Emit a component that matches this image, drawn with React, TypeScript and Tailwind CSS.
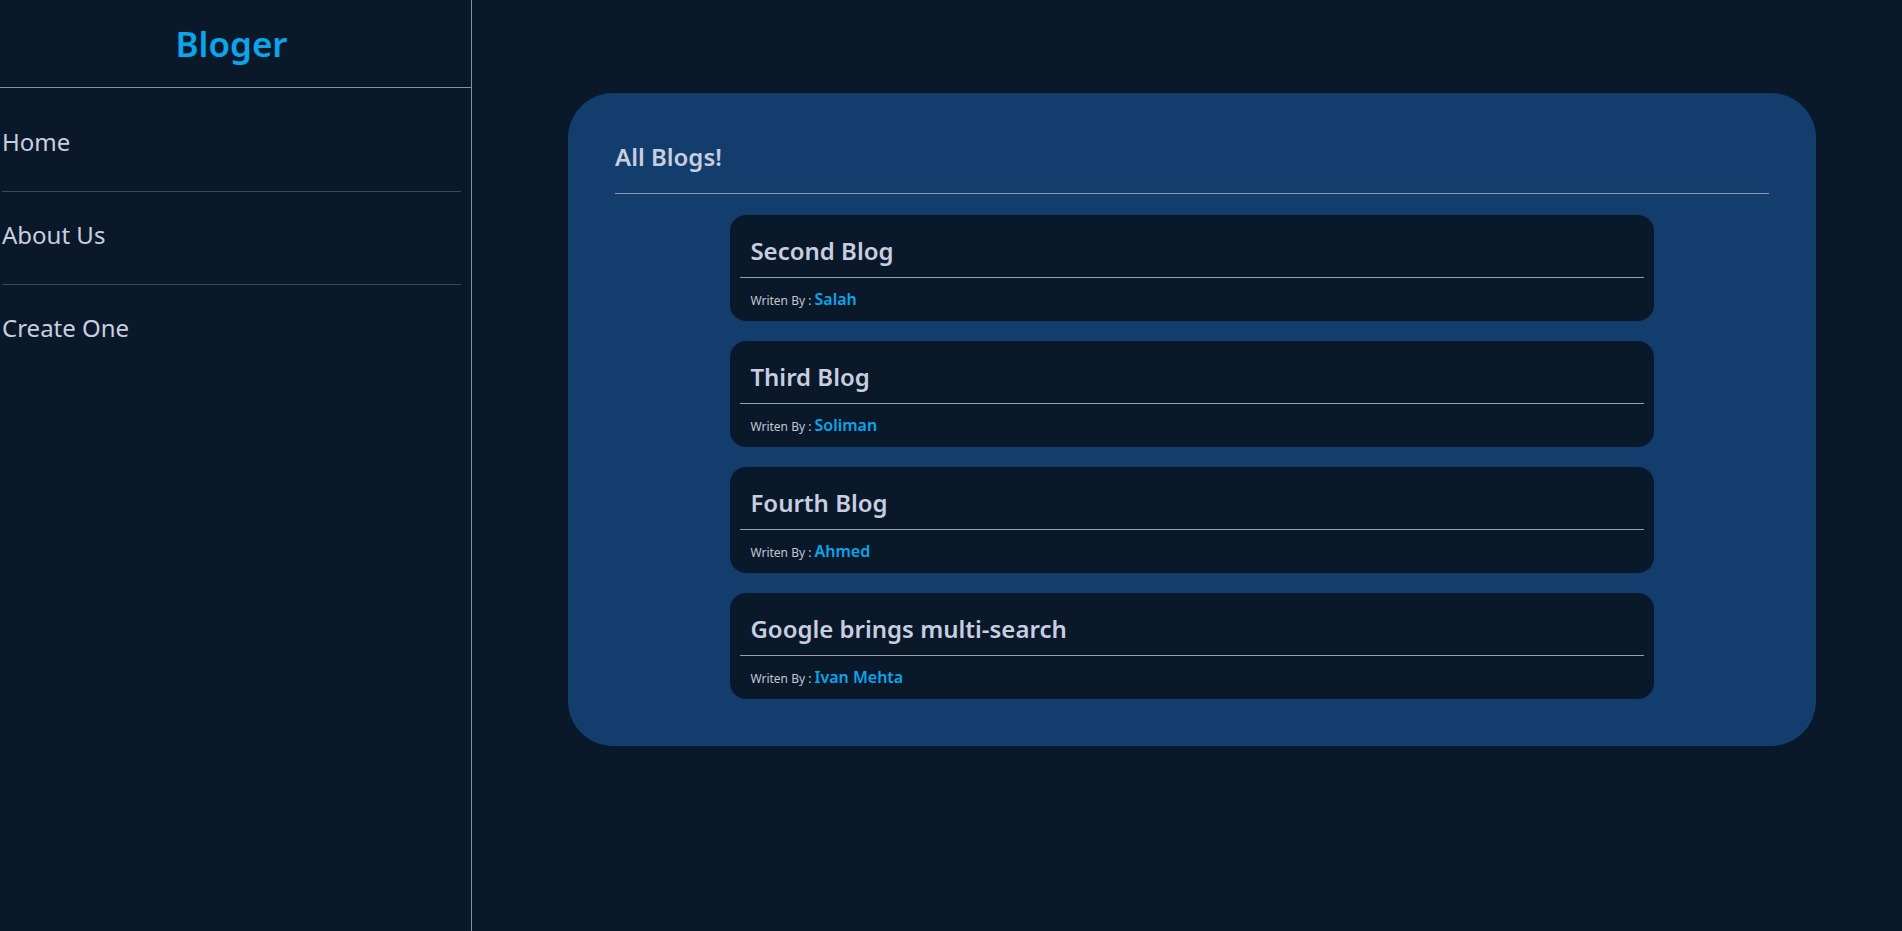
import React from "react";

const blogs = [
  { title: "Second Blog", author: "Salah" },
  { title: "Third Blog", author: "Soliman" },
  { title: "Fourth Blog", author: "Ahmed" },
  { title: "Google brings multi-search", author: "Ivan Mehta" },
];

const links = ["Home", "About Us", "Create One"];

export default function App() {
  return (
    <div
      className="flex h-[931px] w-full overflow-hidden bg-[#0a1929] text-[#c8cee0]"
      style={{ fontFamily: '"Noto Sans", "Open Sans", sans-serif' }}
    >
      {/* Sidebar */}
      <aside className="flex h-full w-[472px] shrink-0 flex-col border-r border-[#8a8e96]">
        <div className="flex h-[88px] items-center justify-center border-b border-[#8a8e96] pr-[8px]">
          <h1 className="text-[35px] font-semibold leading-10 text-[#0ba5ec]">Bloger</h1>
        </div>
        <ul className="ml-[2px] mr-[10px] mt-[11px]">
          {links.map((l, i) => (
            <li
              key={l}
              className={`pb-[33px] pt-[27px] text-2xl leading-8 ${
                i < links.length - 1 ? "border-b border-[#3d4757]" : ""
              }`}
            >
              {l}
            </li>
          ))}
        </ul>
      </aside>

      {/* Main */}
      <main className="flex-1">
        <section className="ml-[96px] mt-[93px] w-[1248px] rounded-[45px] bg-[#123d6c] px-[47px] pb-[47px] pt-[48px]">
          <h2 className="pb-[20px] text-2xl font-semibold leading-8 text-[#c8cee0]">All Blogs!</h2>
          <div className="border-t border-[#8f98a8]" />
          <div className="mx-auto mt-[21px] flex w-[80%] flex-col gap-[20px]">
            {blogs.map((b) => (
              <div key={b.title} className="rounded-2xl bg-[#0a1929] px-[10px] pb-[10px] pt-[10px]">
                <h3 className="border-b border-[#9a9fa8] p-[10px] text-2xl font-semibold leading-8 text-[#c8cee0]">
                  {b.title}
                </h3>
                <div className="px-[10px] pt-[9px] leading-6">
                  <span className="text-xs text-[#c0c6d4]">Writen By : </span>
                  <span className="text-base font-semibold text-[#0ba5ec]">{b.author}</span>
                </div>
              </div>
            ))}
          </div>
        </section>
      </main>
    </div>
  );
}
